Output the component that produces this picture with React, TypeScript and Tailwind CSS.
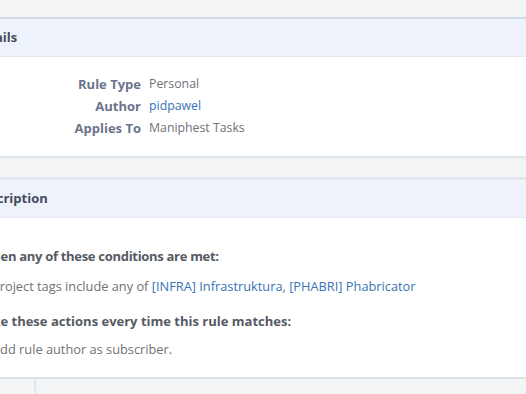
import React from "react";

const font = { fontFamily: '"Open Sans", "Noto Sans", "Liberation Sans", sans-serif' };

function Header({ title, shift }: { title: string; shift: string }) {
  return (
    <div className="h-[38px] bg-[#edf2fb] border-b border-[#e4eaf3] flex items-center">
      <div className={`${shift} text-[13px] font-bold text-[#464c5c] whitespace-nowrap`}>{title}</div>
    </div>
  );
}

export default function App() {
  const rows: [string, React.ReactNode][] = [
    ["Rule Type", <span className="text-[#6f7277]">Personal</span>],
    ["Author", <span className="text-[#3a72b6]">pidpawel</span>],
    ["Applies To", <span className="text-[#6f7277]">Maniphest Tasks</span>],
  ];
  return (
    <div className="w-[526px] h-[394px] overflow-hidden bg-[#f3f4f6] flex flex-col" style={font}>
      <div className="h-[17px] shrink-0" />
      <section className="shrink-0 bg-white border-t-2 border-[#d3dbe4] border-b-2 border-b-[#dfe5ec]">
        <Header title="Details" shift="-ml-[28px]" />
        <div className="pt-[16px] pb-[17px] grid grid-cols-[141px_1fr] gap-x-[8px] leading-[22px]">
          {rows.map(([k, v]) => (
            <React.Fragment key={k}>
              <div className="text-right font-bold text-[13px] text-[#6b748c] whitespace-nowrap">{k}</div>
              <div className="whitespace-nowrap text-[12.3px]">{v}</div>
            </React.Fragment>
          ))}
        </div>
      </section>
      <div className="h-[19px] shrink-0" />
      <section className="shrink-0 bg-white border-t-[3px] border-[#e1e7ef] border-b-2 border-b-[#dbe1e8]">
        <Header title="Description" shift="-ml-[27px]" />
        <div className="-ml-[20px] pt-[29px] pb-[19px] text-[12.8px] leading-[18px] whitespace-nowrap">
          <div className="font-bold text-[13px] tracking-[-0.3px] text-[#555a63]">When any of these conditions are met:</div>
          <div className="pl-[12px] mt-[12px] text-[#6f7277]">
            Project tags include any of{" "}
            <span className="text-[#3a72b6]">[INFRA] Infrastruktura</span>,{" "}
            <span className="text-[#3a72b6]">[PHABRI] Phabricator</span>
          </div>
          <div className="font-bold text-[13px] text-[#555a63] mt-[17px] -ml-[3px]">Take these actions every time this rule matches:</div>
          <div className="pl-[12px] mt-[10px] text-[#6f7277]">Add rule author as subscriber.</div>
        </div>
      </section>
      <div className="flex-1 flex">
        <div className="w-[36px] border-r-2 border-[#e3e7ec]" />
        <div className="flex-1" />
      </div>
    </div>
  );
}
